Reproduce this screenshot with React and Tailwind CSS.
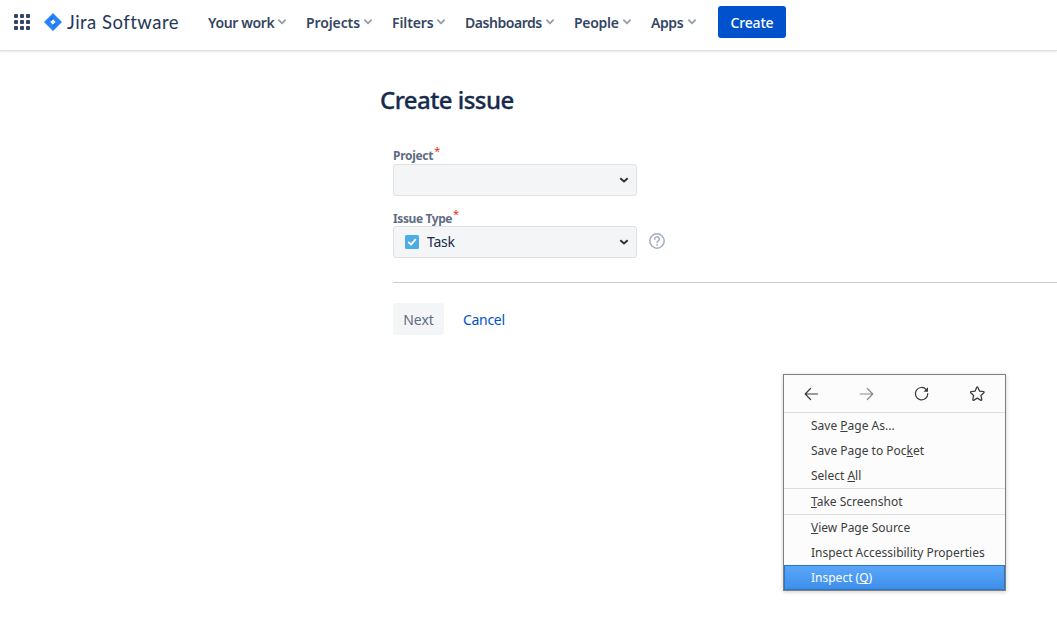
const NAV = [
  { label: 'Your work', cls: 'w-[66px] tracking-[-0.35px]' },
  { label: 'Projects', cls: 'w-[54px] tracking-[-0.1px]' },
  { label: 'Filters', cls: 'w-[41px] tracking-[-0.1px]' },
  { label: 'Dashboards', cls: 'w-[77px] tracking-[-0.45px]' },
  { label: 'People', cls: 'w-[45px] tracking-[-0.3px]' },
  { label: 'Apps', cls: 'w-[33px] tracking-[-0.4px]' },
];

function AppGrid() {
  return (
    <svg width="16" height="16" viewBox="0 0 16 16" className="ml-3.5 shrink-0" fill="#344563">
      {[0, 6, 12].map((y) => [0, 6, 12].map((x) => (
        <rect key={`${x}-${y}`} x={x} y={y} width="4" height="4" rx="0.9" />
      )))}
    </svg>
  );
}

function JiraMark() {
  return (
    <svg width="18" height="18" viewBox="0 0 18 18" className="ml-[13.5px] shrink-0">
      <path d="M9 0 18 9 9 18 0 9Z M9 6.300 6.300 9 9 11.700 11.700 9Z" fill="#2684FF" fillRule="evenodd" />
      <path d="M9 3v3.300L7 8.300C5.800 6.900 6.500 4.500 9 3Z" fill="#1262d6" opacity="0.6" />
      <path d="M9 15v-3.300l2-2C12.200 11.100 11.500 13.500 9 15Z" fill="#1262d6" opacity="0.6" />
    </svg>
  );
}

function NavChevron() {
  return (
    <svg width="8" height="6" viewBox="0 0 8 6" className="ml-1 shrink-0">
      <path d="M0.900 1.200 4 4.400 7.100 1.200" fill="none" stroke="#97A0AF" strokeWidth="1.900" strokeLinecap="round" strokeLinejoin="round" />
    </svg>
  );
}

function SelectBox({ children }) {
  return (
    <div className="flex h-8 w-[244px] items-center rounded-[3px] border border-[#dfe1e6] bg-[#f4f5f7] pr-[7px] pl-[11px]">
      {children}
      <svg width="10" height="8" viewBox="0 0 10 8" className="ml-auto">
        <path d="M1.300 2.200 5 5.500 8.700 2.200" fill="none" stroke="#2e3436" strokeWidth="2" />
      </svg>
    </div>
  );
}

function FieldLabel({ children, cls }) {
  return (
    <div className="flex h-4 items-center text-[12px] leading-4 font-bold text-[#5e6c84]">
      <span className={`whitespace-nowrap ${cls}`}>{children}</span>
      <span className="-mt-[10px] ml-px text-[11px] font-normal text-[#de350b]">*</span>
    </div>
  );
}

function MenuItem({ children, cls = 'text-[#3d3d3d]' }) {
  return (
    <div className={`flex h-[25px] items-center pl-[27px] whitespace-pre ${cls}`}>
      <span>{children}</span>
    </div>
  );
}

function U({ children }) {
  return <span className="underline decoration-1 underline-offset-1 [text-decoration-skip-ink:none]">{children}</span>;
}

function ContextMenu() {
  return (
    <div className="absolute top-[374px] left-[783px] w-[223px] border border-[#7f7f7f] bg-[#fcfcfc] text-[12px] leading-4 shadow-[0_1px_4px_rgba(0,0,0,0.2)]">
      <div className="grid h-[37px] grid-cols-4 place-items-center">
        <svg width="16" height="16" viewBox="0 0 16 16" fill="none" stroke="#3d3d3d" strokeWidth="1.200" strokeLinecap="round" strokeLinejoin="round">
          <path d="M13.500 8H1.200M6.500 2.500 1.200 8 6.500 13.500" />
        </svg>
        <svg width="16" height="16" viewBox="0 0 16 16" fill="none" stroke="#8c8c8c" strokeWidth="1.200" strokeLinecap="round" strokeLinejoin="round">
          <path d="M1.200 8h12.500M8.300 2.500 13.800 8 8.300 13.500" />
        </svg>
        <svg width="16" height="16" viewBox="0 0 16 16" fill="none" stroke="#3d3d3d" strokeWidth="1.200" strokeLinecap="round">
          <path d="M12.200 3.500A6.200 6.200 0 1 0 13.800 7.500" />
          <path d="M14 1.200v4.500H9.500Z" fill="#3d3d3d" stroke="none" />
        </svg>
        <svg width="16" height="16" viewBox="0 0 16 16" fill="none" stroke="#3d3d3d" strokeWidth="1.300" strokeLinejoin="round">
          <path d="M7.650 1.500Q8.300.4 8.950 1.500L10.600 5.200 14.400 5.600Q15.600 5.900 14.700 6.900L11.900 9.400 12.800 13.300Q12.800 14.700 11.600 14.100L8.300 12.100 5 14.100Q3.800 14.700 3.800 13.300L4.700 9.400 1.900 6.900Q1 5.900 2.200 5.600L6 5.200Z" />
        </svg>
      </div>
      <div className="border-y border-[#dedede]">
        <MenuItem>Save <U>P</U>age As...</MenuItem>
        <MenuItem>Save Page to Poc<U>k</U>et</MenuItem>
        <MenuItem>Select <U>A</U>ll</MenuItem>
      </div>
      <div className="border-b border-[#dedede]">
        <MenuItem><U>T</U>ake Screenshot</MenuItem>
      </div>
      <MenuItem><U>V</U>iew Page Source</MenuItem>
      <MenuItem>Inspect Accessibility Properties</MenuItem>
      <div className="bg-linear-to-b from-[#5ba7fb] to-[#3d8ee9] shadow-[inset_0_0_0_1px_#2a76c6]">
        <MenuItem cls="text-white">Inspect (<U>Q</U>)</MenuItem>
      </div>
    </div>
  );
}

export default function App() {
  return (
    <div className="relative h-[638px] w-[1057px] overflow-hidden bg-white font-['Noto_Sans',sans-serif] text-[#172b4d]">
      <header className="flex h-[51px] items-center border-b border-[#dfe1e6] pb-1.5 shadow-[0_1px_2px_rgba(9,30,66,0.10)]">
        <AppGrid />
        <JiraMark />
        <span className="ml-[5.5px] w-[112px] pb-px font-[Lato,sans-serif] text-[18.500px] leading-6 tracking-[0.480px] whitespace-nowrap text-[#253858]">Jira Software</span>
        <nav className="ml-[29px] flex gap-5 text-[14px] font-semibold text-[#344563]">
          {NAV.map((n) => (
            <div key={n.label} className="flex items-center">
              <span className={`whitespace-nowrap ${n.cls}`}>{n.label}</span>
              <NavChevron />
            </div>
          ))}
        </nav>
        <button className="ml-[22px] h-8 w-[68px] rounded-[3px] bg-[#0052cc] text-[14px] font-medium tracking-[-0.200px] text-white">Create</button>
      </header>

      <main className="pl-[380px]">
        <h1 className="mt-[35px] text-[24px] leading-7 font-medium tracking-[-0.550px] whitespace-nowrap [-webkit-text-stroke:0.3px_#172b4d]">Create issue</h1>
        <div className="pt-[34px] pl-[13px]">
          <FieldLabel cls="tracking-[-0.300px]">Project</FieldLabel>
          <SelectBox />
          <div className="h-[15px]" />
          <FieldLabel cls="tracking-[-0.400px]">Issue Type</FieldLabel>
          <div className="-mt-px flex items-center">
            <SelectBox>
              <svg width="14" height="14" viewBox="0 0 14 14">
                <rect width="14" height="14" rx="1.500" fill="#4bade8" />
                <path d="m3.800 7.400 2.200 2.200 4.300-5" fill="none" stroke="#fff" strokeWidth="1.800" strokeLinecap="round" />
              </svg>
              <span className="ml-2 pb-0.5 text-[14px] tracking-[-0.200px]">Task</span>
            </SelectBox>
            <svg width="16" height="16" viewBox="0 0 16 16" className="-mt-0.5 ml-[11.5px]" fill="none" stroke="#a5adba" strokeWidth="1.500" strokeLinecap="round">
              <circle cx="8" cy="8" r="7.200" />
              <path d="M5.700 6.200a2.300 2.300 0 1 1 3.500 1.900C8.400 8.600 8 8.800 8 9.500" />
              <circle cx="8" cy="11.900" r="0.400" fill="#a5adba" strokeWidth="0.900" />
            </svg>
          </div>
          <div className="mt-6 border-t border-[#cccccc]" />
          <div className="mt-5 flex items-center text-[14px]">
            <button className="h-8 w-[51px] rounded-[3px] bg-[#f4f5f7] text-[#5e6c84]">Next</button>
            <a className="ml-[19px] tracking-[-0.300px] text-[#0052cc]">Cancel</a>
          </div>
        </div>
      </main>
      <ContextMenu />
    </div>
  );
}
